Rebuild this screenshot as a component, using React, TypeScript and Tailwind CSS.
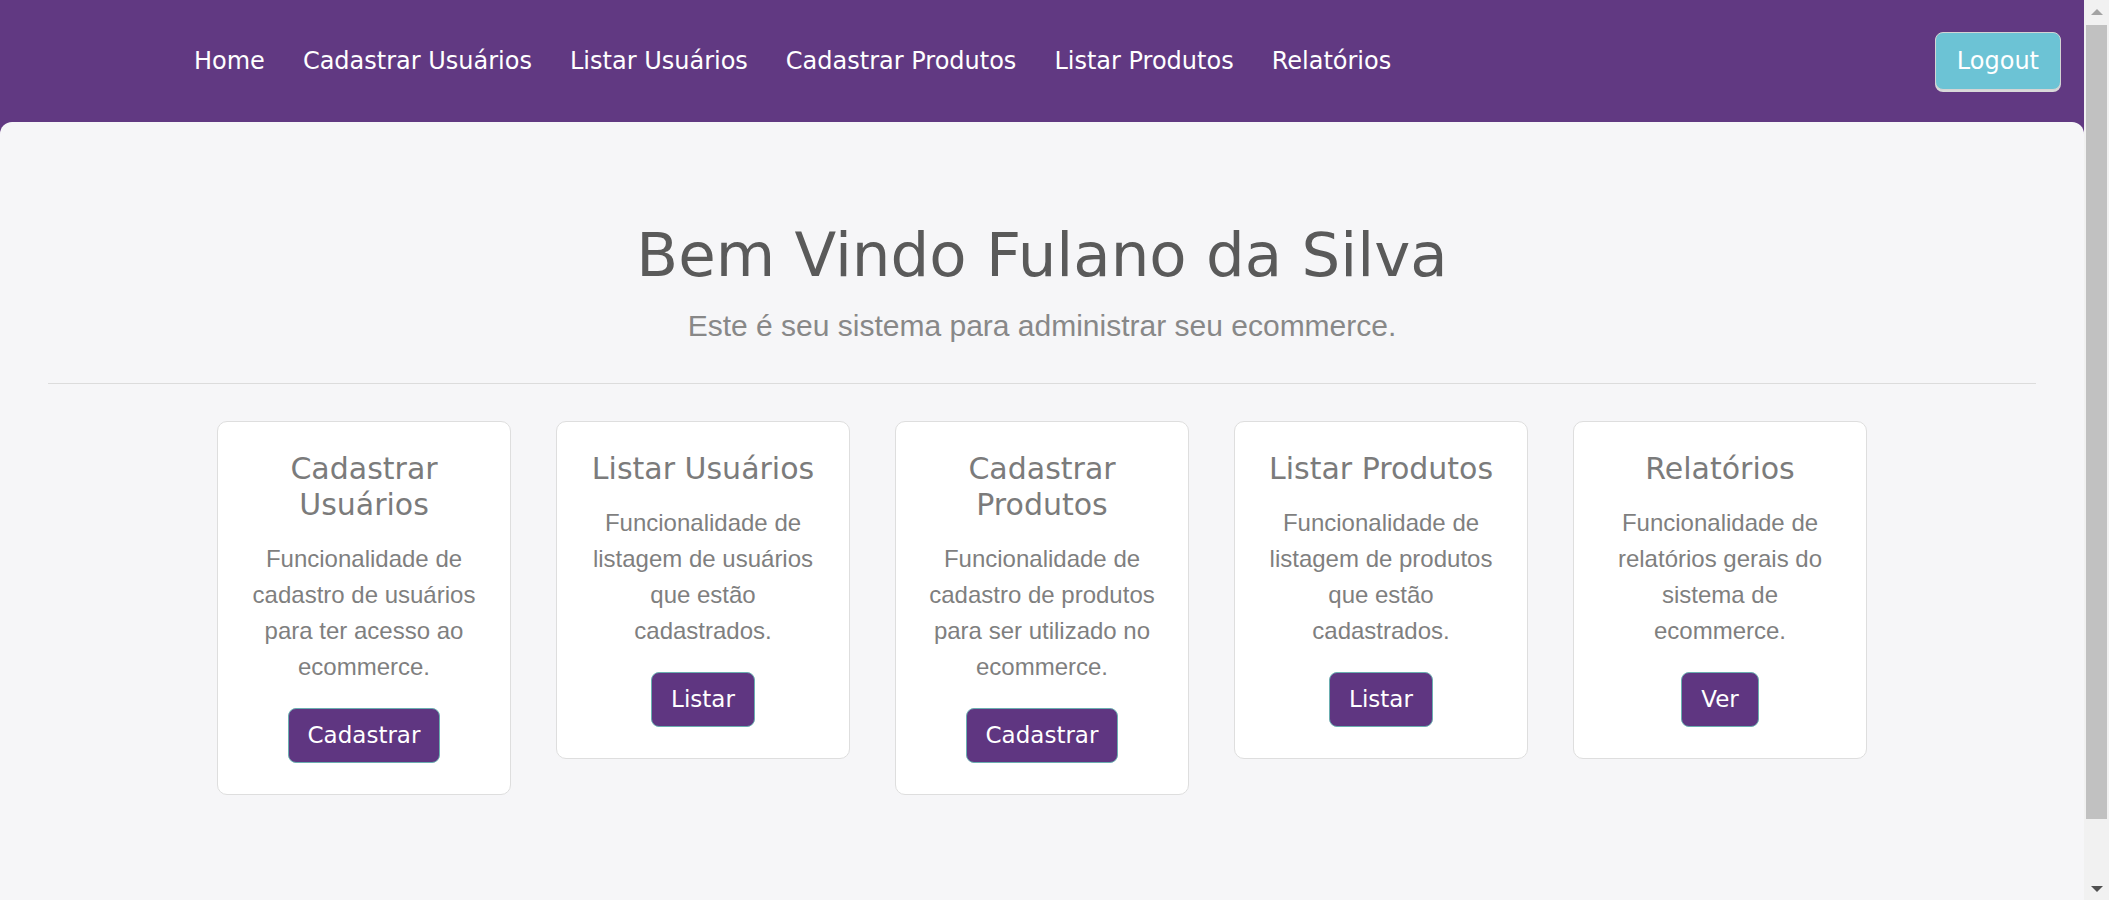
import React from "react";

const links = [
  "Home",
  "Cadastrar Usuários",
  "Listar Usuários",
  "Cadastrar Produtos",
  "Listar Produtos",
  "Relatórios",
];

const cards = [
  {
    title: "Cadastrar Usuários",
    text: "Funcionalidade de cadastro de usuários para ter acesso ao ecommerce.",
    action: "Cadastrar",
  },
  {
    title: "Listar Usuários",
    text: "Funcionalidade de listagem de usuários que estão cadastrados.",
    action: "Listar",
  },
  {
    title: "Cadastrar Produtos",
    text: "Funcionalidade de cadastro de produtos para ser utilizado no ecommerce.",
    action: "Cadastrar",
  },
  {
    title: "Listar Produtos",
    text: "Funcionalidade de listagem de produtos que estão cadastrados.",
    action: "Listar",
  },
  {
    title: "Relatórios",
    text: "Funcionalidade de relatórios gerais do sistema de ecommerce.",
    action: "Ver",
  },
];

const display = "font-['DejaVu_Sans',sans-serif]";

function Scrollbar() {
  return (
    <div className="w-[25px] h-[900px] shrink-0 bg-[#f1f1f1] flex flex-col items-center">
      <div className="h-[23px] w-full flex items-center justify-center">
        <div className="w-0 h-0 border-x-[6px] border-x-transparent border-b-[6px] border-b-[#a3a3a3]" />
      </div>
      <div className="mt-[2px] h-[794px] w-[21px] bg-[#c1c1c1]" />
      <div className="flex-1" />
      <div className="h-[23px] w-full flex items-center justify-center">
        <div className="w-0 h-0 border-x-[6px] border-x-transparent border-t-[6px] border-t-[#505050]" />
      </div>
    </div>
  );
}

export default function App() {
  return (
    <div className="flex items-start">
      <div className="flex-1 min-w-0 min-h-[968px] bg-[#613982] flex flex-col">
        <nav className={`h-[122px] flex items-center pl-[175px] pr-[23px] ${display}`}>
          <ul className="flex items-center flex-1">
            {links.map((link) => (
              <li key={link}>
                <a href="#" className="px-[19px] text-[24px] text-white">
                  {link}
                </a>
              </li>
            ))}
          </ul>
          <button className="h-[58px] px-[21px] rounded-[8px] bg-[#6cc3d5] border border-[#d4d4d4] shadow-[0_2px_0_#d9d9d9] text-[24px] text-white">
            Logout
          </button>
        </nav>

        <main className="flex-1 bg-[#f6f6f8] rounded-t-[12px] pt-[97px] pb-[172px]">
          <div className="text-center">
            <h1 className={`text-[61px] leading-[72px] text-[#5a5a5a] ${display}`}>
              Bem Vindo Fulano da Silva
            </h1>
            <p className="mt-[12px] text-[30px] leading-[45px] text-[#888888] font-['Liberation_Sans',Arial,sans-serif]">
              Este é seu sistema para administrar seu ecommerce.
            </p>
          </div>

          <hr className="mt-[35px] mx-[48px] border-0 border-t border-[#dcdcdc]" />

          <div className="mt-[37px] flex justify-center items-start gap-[45px]">
            {cards.map((card) => (
              <div
                key={card.title}
                className="w-[294px] bg-white border border-[#dedede] rounded-[10px] px-[27px] pt-[29px] pb-[31px] flex flex-col items-center text-center"
              >
                <h3 className={`text-[30px] leading-[36px] text-[#7b7b7b] ${display}`}>
                  {card.title}
                </h3>
                <p className="mt-[18px] text-[24px] leading-[36px] text-[#7f7f7f] font-['Liberation_Sans',Arial,sans-serif]">
                  {card.text}
                </p>
                <button
                  className={`mt-[23px] px-[19px] py-[9px] leading-[35px] text-[23px] text-white bg-[#5f3681] border border-[#6aaeb0] rounded-[8px] ${display}`}
                >
                  {card.action}
                </button>
              </div>
            ))}
          </div>
        </main>
      </div>
      <Scrollbar />
    </div>
  );
}
